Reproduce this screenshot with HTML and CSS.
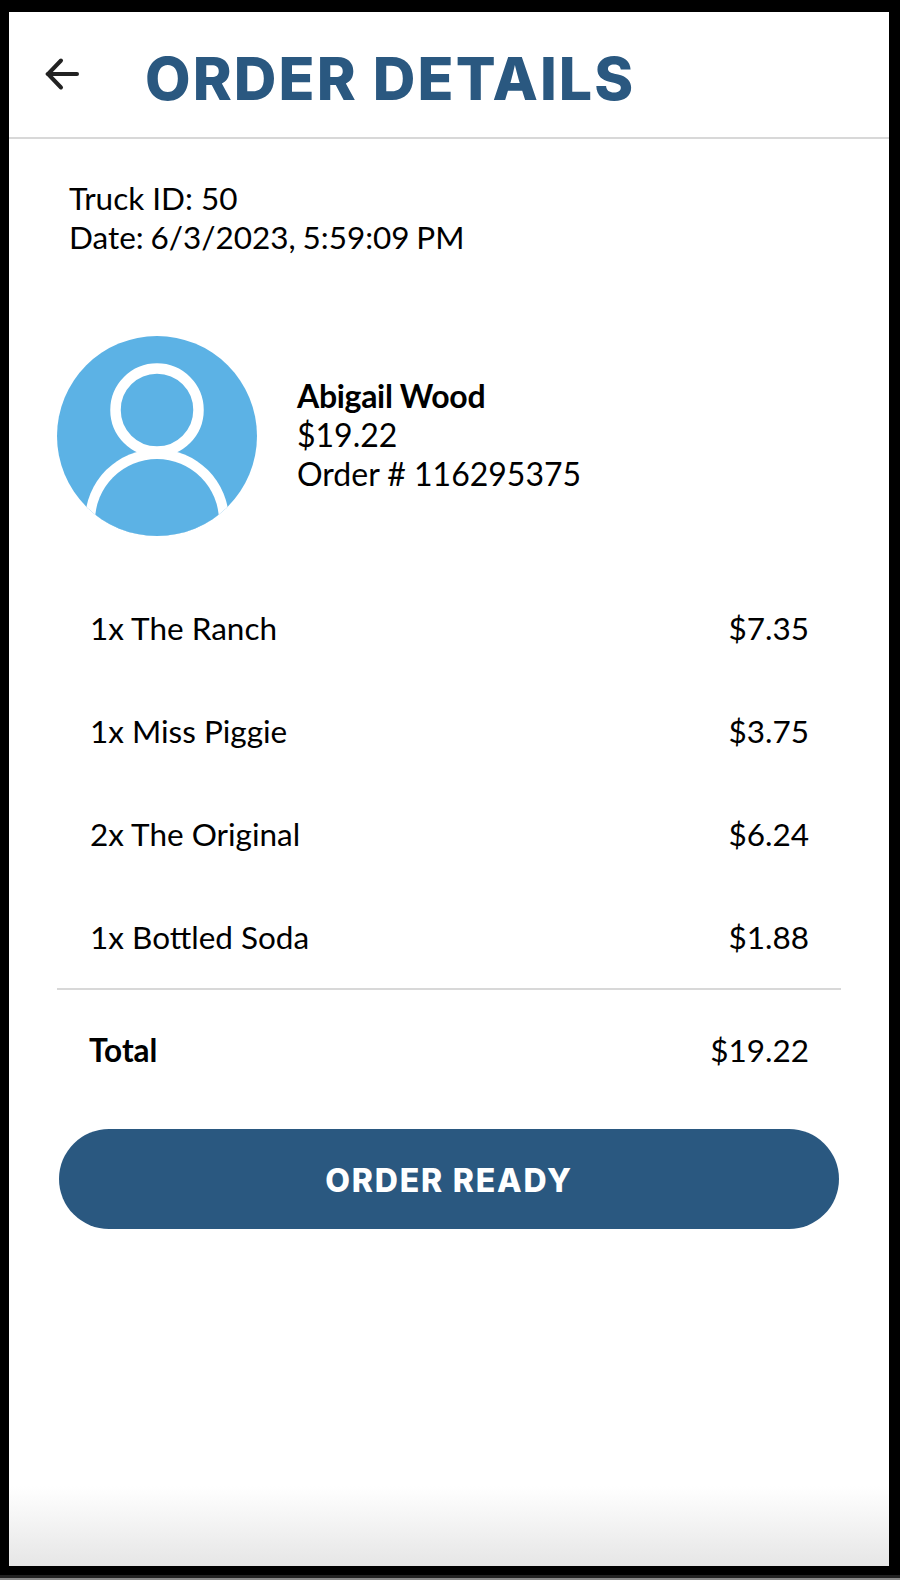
FILE: index.html
```html
<!DOCTYPE html>
<html lang="en">
<head>
  <meta charset="UTF-8" />
  <meta name="viewport" content="width=device-width, initial-scale=1.0"/>
  <title>Order Details</title>
  <link rel="stylesheet" href="styles.css">
</head>
<body>
  <div class="app">
    <div class="header">
      <svg class="back" width="34" height="34" viewBox="0 0 34 34" fill="none" stroke="#222" stroke-width="4" stroke-linecap="round">
        <path d="M32 17H3"/>
        <path d="M16 3.5L3 17L16 30.5"/>
      </svg>
      <h1>ORDER DETAILS</h1>
    </div>

    <div class="meta">
      <div>Truck ID: 50</div>
      <div class="date">Date: 6/3/2023, 5:59:09 PM</div>
    </div>

    <div class="customer">
      <svg class="avatar" width="200" height="200" viewBox="0 0 200 200">
        <defs>
          <clipPath id="disc"><circle cx="100" cy="100" r="100"/></clipPath>
        </defs>
        <circle cx="100" cy="100" r="100" fill="#5cb2e5"/>
        <g clip-path="url(#disc)">
          <circle cx="100" cy="185" r="72" fill="#fff"/>
          <circle cx="100" cy="185" r="62" fill="#5cb2e5"/>
        </g>
        <circle cx="100" cy="74" r="41.5" fill="#5cb2e5" stroke="#fff" stroke-width="10.5"/>
      </svg>
      <div class="info">
        <div class="name">Abigail Wood</div>
        <div>$19.22</div>
        <div>Order # 116295375</div>
      </div>
    </div>

    <div class="items">
      <div class="row"><span>1x The Ranch</span><span>$7.35</span></div>
      <div class="row"><span>1x Miss Piggie</span><span>$3.75</span></div>
      <div class="row"><span>2x The Original</span><span>$6.24</span></div>
      <div class="row"><span>1x Bottled Soda</span><span>$1.88</span></div>
    </div>

    <div class="total">
      <span class="total-label">Total</span><span>$19.22</span>
    </div>

    <button class="ready">ORDER READY</button>
  </div>
</body>
</html>
```

FILE: styles.css
```css
html, body {
  margin: 0;
  height: 100%;
}
body {
  box-sizing: border-box;
  height: 1580px;
  padding: 12px 11px 14px 9px;
  background: linear-gradient(to bottom, #000 1575px, #222 1575px, #222 1578px, #8a8a8a 1578px);
  font-family: "Lato", sans-serif;
  font-size: 32px;
  color: #000;
  overflow: hidden;
}
.app {
  height: 100%;
  background: linear-gradient(to bottom, #fff calc(100% - 80px), #e6e6e6 100%);
}
.header {
  display: flex;
  align-items: center;
  box-sizing: border-box;
  height: 127px;
  padding: 0 0 2px 36px;
  border-bottom: 2px solid #d8d8d8;
}
.back {
  margin-right: 66px;
}
h1 {
  margin: 10px 0 0;
  font-family: "Inter", sans-serif;
  font-size: 59px;
  font-weight: 800;
  letter-spacing: 2.1px;
  color: #2a5880;
}
.meta {
  padding: 40px 0 0 60px;
  font-size: 31.5px;
  line-height: 39px;
}
.date {
  word-spacing: -1.3px;
}
.customer {
  display: flex;
  align-items: center;
  margin-top: 79px;
  padding-left: 48px;
}
.info {
  margin-left: 40px;
  padding-bottom: 4px;
  line-height: 39px;
}
.name {
  font-weight: 700;
  letter-spacing: -0.3px;
}
.items {
  margin: 40px 48px 0;
  padding: 0 32px 0 33px;
  border-bottom: 2px solid #d8d8d8;
  font-size: 31.5px;
}
.row, .total {
  display: flex;
  justify-content: space-between;
  align-items: center;
}
.row {
  height: 103px;
}
.total {
  height: 120px;
  padding: 0 80px;
  font-size: 31.5px;
}
.total-label {
  font-weight: 700;
}
.ready {
  display: block;
  width: 780px;
  height: 100px;
  margin: 19px 0 0 50px;
  padding-top: 4px;
  border: none;
  border-radius: 50px;
  background: #2a5880;
  color: #fff;
  font-family: "Inter", sans-serif;
  font-size: 32px;
  font-weight: 800;
  letter-spacing: 1.8px;
}
```
